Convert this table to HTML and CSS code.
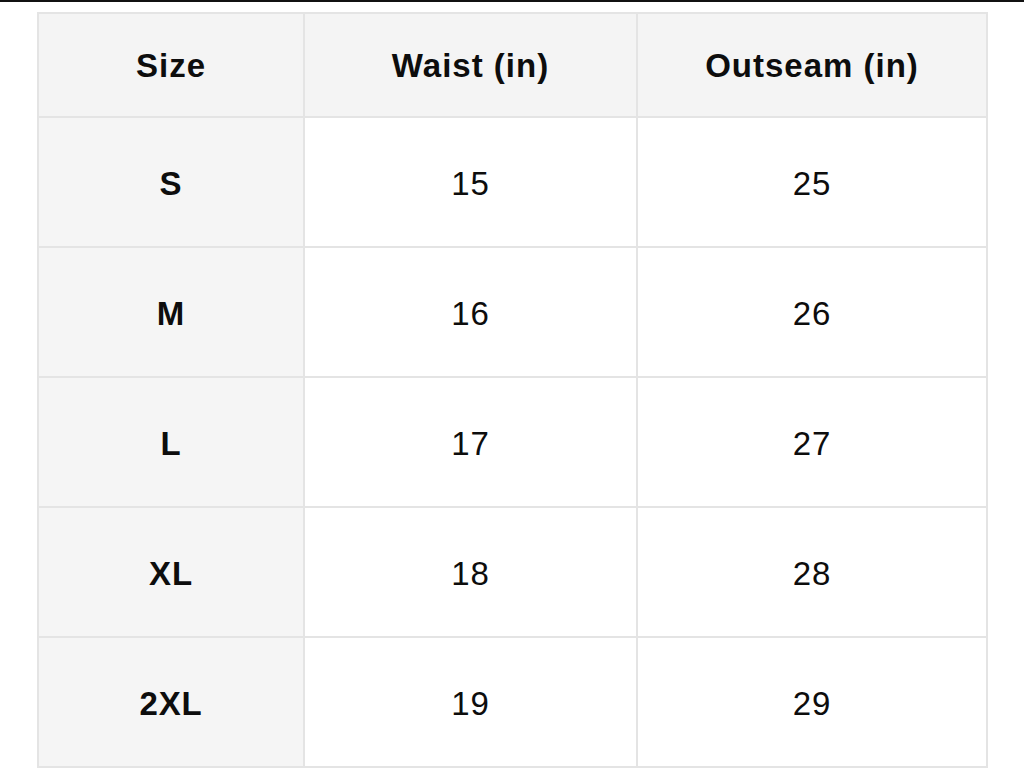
FILE: index.html
```html
<!DOCTYPE html>
<html>
<head>
<meta charset="utf-8">
<link rel="stylesheet" href="styles.css">
</head>
<body>
<div class="topbar"></div>
<table class="size-table">
  <colgroup>
    <col class="c1"><col class="c2"><col class="c3">
  </colgroup>
  <thead>
    <tr class="head-row"><th>Size</th><th>Waist (in)</th><th>Outseam (in)</th></tr>
  </thead>
  <tbody>
    <tr><th>S</th><td>15</td><td>25</td></tr>
    <tr><th>M</th><td>16</td><td>26</td></tr>
    <tr><th>L</th><td>17</td><td>27</td></tr>
    <tr><th>XL</th><td>18</td><td>28</td></tr>
    <tr><th>2XL</th><td>19</td><td>29</td></tr>
    <tr class="tail-row"><th></th><td></td><td></td></tr>
  </tbody>
</table>
</body>
</html>
```
FILE: styles.css
```css
html, body {
  margin: 0;
  padding: 0;
  background: #ffffff;
  overflow: hidden;
}
body {
  font-family: "Liberation Sans", Arial, sans-serif;
  color: #0d0d0d;
}
.topbar {
  height: 2px;
  background: #111111;
}
.size-table {
  margin: 10px 0 0 37px;
  border-collapse: collapse;
  table-layout: fixed;
  width: 949px;
}
.c1 { width: 266px; }
.c2 { width: 333px; }
.c3 { width: 350px; }
.size-table th,
.size-table td {
  border: 2px solid #e4e4e4;
  text-align: center;
  vertical-align: middle;
  padding: 3px 0 0 0;
  height: 125px;
  font-size: 33px;
  letter-spacing: 0.8px;
}
.size-table td {
  font-weight: 400;
  background: #ffffff;
}
.size-table tbody th {
  font-weight: 700;
  background: #f5f5f5;
}
.head-row th {
  height: 101px;
  padding: 1px 0 0 0;
  font-weight: 700;
  background: #f4f4f4;
  letter-spacing: 1px;
}
```
